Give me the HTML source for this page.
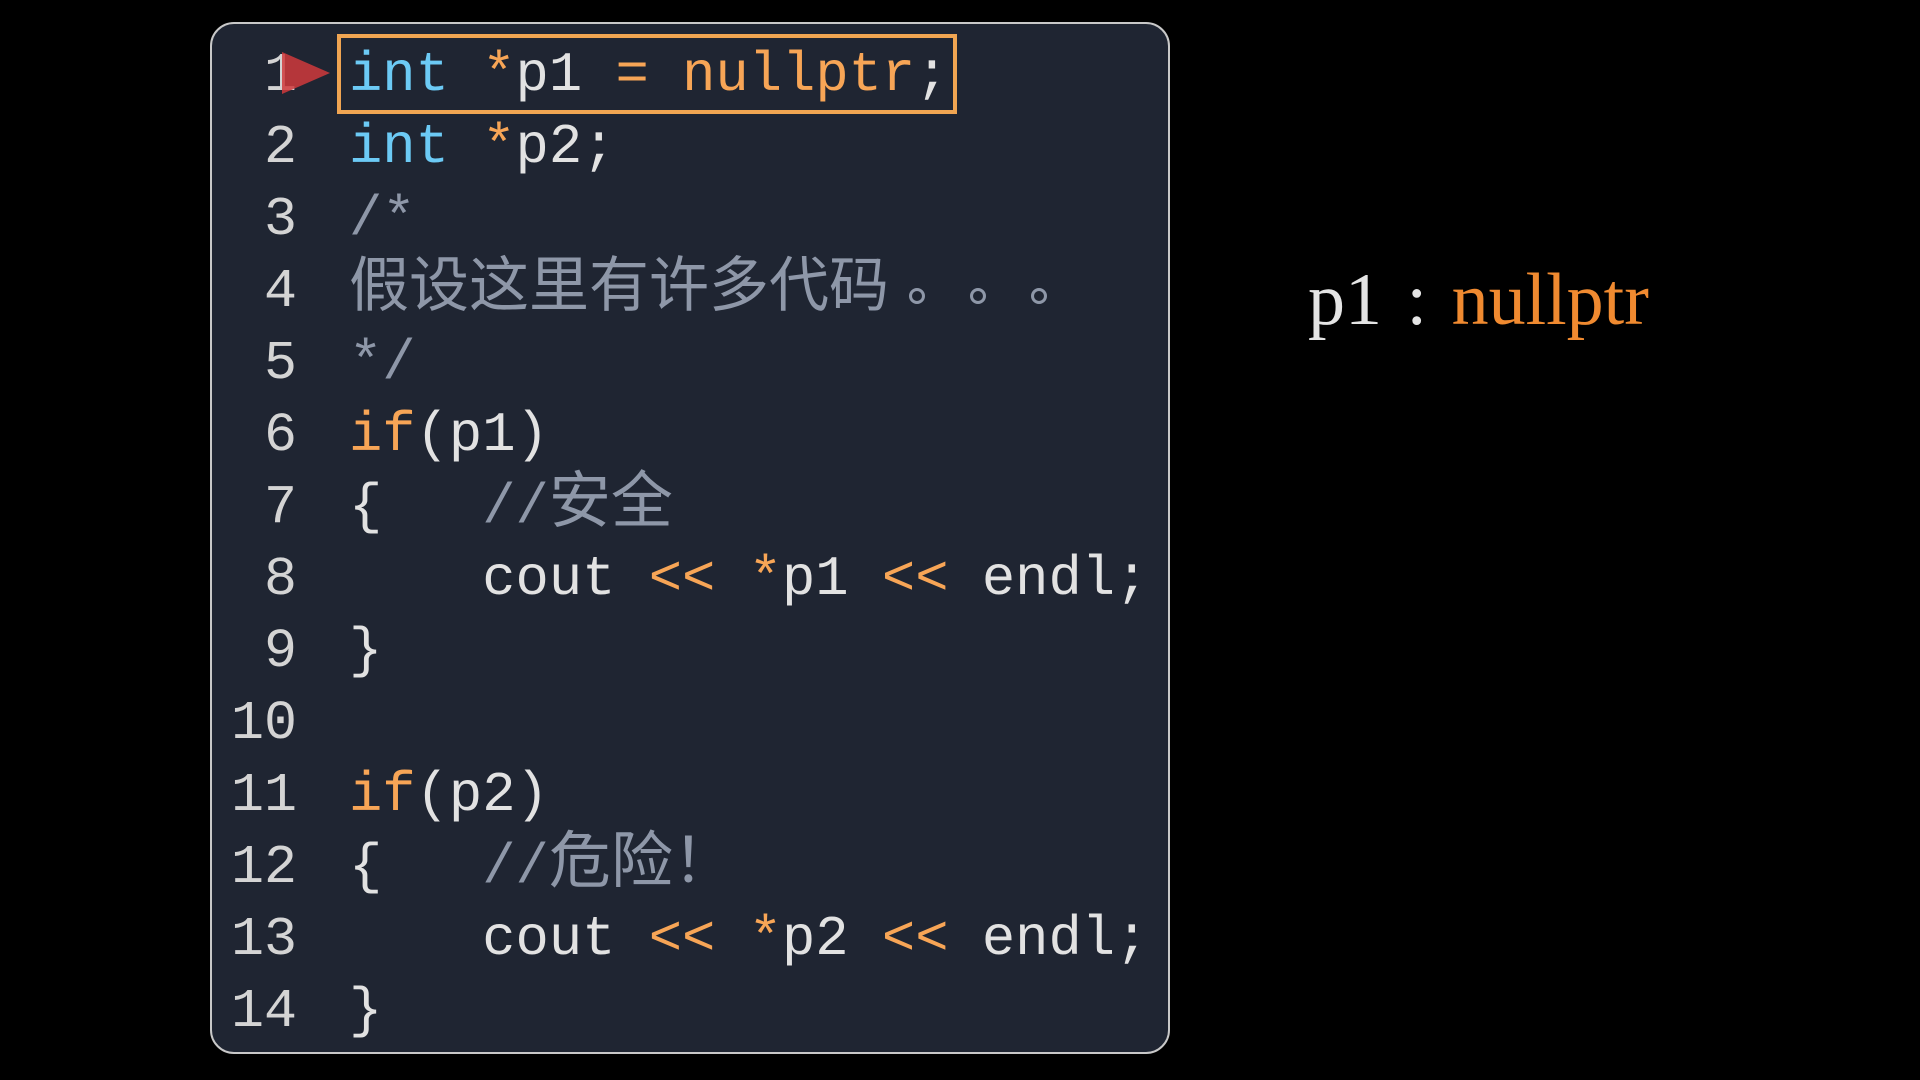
<!DOCTYPE html>
<html><head><meta charset="utf-8"><style>
html,body{margin:0;padding:0;background:#000;width:1920px;height:1080px;overflow:hidden}
.panel{position:absolute;left:210px;top:22px;width:960px;height:1032px;background:#1f2532;border:2px solid #c8c8c8;border-radius:24px;box-sizing:border-box}
.ln{position:absolute;left:0;width:297px;text-align:right;font-family:"Liberation Mono",monospace;font-size:55px;color:#d4d4d4}
.code{position:absolute;left:349px;font-family:"Liberation Mono","Noto Sans CJK SC",monospace;font-size:55.5px;color:#e2e2e2}
.l{height:72px;line-height:72px;white-space:pre}
.b{color:#6ccaf5}.o{color:#f7a556}.c{color:#8e97a8}
.cj{font-family:"Noto Sans CJK SC",sans-serif;font-size:62px;color:#8e97a8;line-height:0}
.dot{display:inline-block;width:10px;height:10px;border:3px solid #8e97a8;border-radius:50%;margin-left:45px;vertical-align:2px}
.box{position:absolute;left:337px;top:34px;width:620px;height:80px;border:4px solid #f0a552;box-sizing:border-box}
.right{position:absolute;left:1308px;top:258px;font-family:"Liberation Serif",serif;font-size:74px;color:#e4e4e4;white-space:pre}
</style></head><body>
<div class="panel"></div>
<div class="ln" style="top:40px"><div class="l">1</div><div class="l">2</div><div class="l">3</div><div class="l">4</div><div class="l">5</div><div class="l">6</div><div class="l">7</div><div class="l">8</div><div class="l">9</div><div class="l">10</div><div class="l">11</div><div class="l">12</div><div class="l">13</div><div class="l">14</div></div>
<div class="code" style="top:40px"><div class="l"><span class="b">int</span> <span class="o">*</span>p1 <span class="o">=</span> <span class="o">nullptr</span>;</div><div class="l"><span class="b">int</span> <span class="o">*</span>p2;</div><div class="l c">/*</div><div class="l"><span class="cj" style="font-size:60px">假设这里有许多代码</span><span class="dot" style="margin-left:20px"></span><span class="dot"></span><span class="dot"></span></div><div class="l c">*/</div><div class="l"><span class="o">if</span>(p1)</div><div class="l">{   <span class="c">//</span><span class="cj">安全</span></div><div class="l">    cout <span class="o">&lt;&lt;</span> <span class="o">*</span>p1 <span class="o">&lt;&lt;</span> endl;</div><div class="l">}</div><div class="l"> </div><div class="l"><span class="o">if</span>(p2)</div><div class="l">{   <span class="c">//</span><span class="cj">危险！</span></div><div class="l">    cout <span class="o">&lt;&lt;</span> <span class="o">*</span>p2 <span class="o">&lt;&lt;</span> endl;</div><div class="l">}</div></div>
<div class="box"></div>
<svg style="position:absolute;left:280px;top:50px" width="52" height="46"><polygon points="2,2 50,23 2,44" fill="#d0393c" opacity="0.85"/></svg>
<div class="right">p1<span style="margin:0 6px"> : </span><span style="color:#f08a30">nullptr</span></div>
</body></html>
